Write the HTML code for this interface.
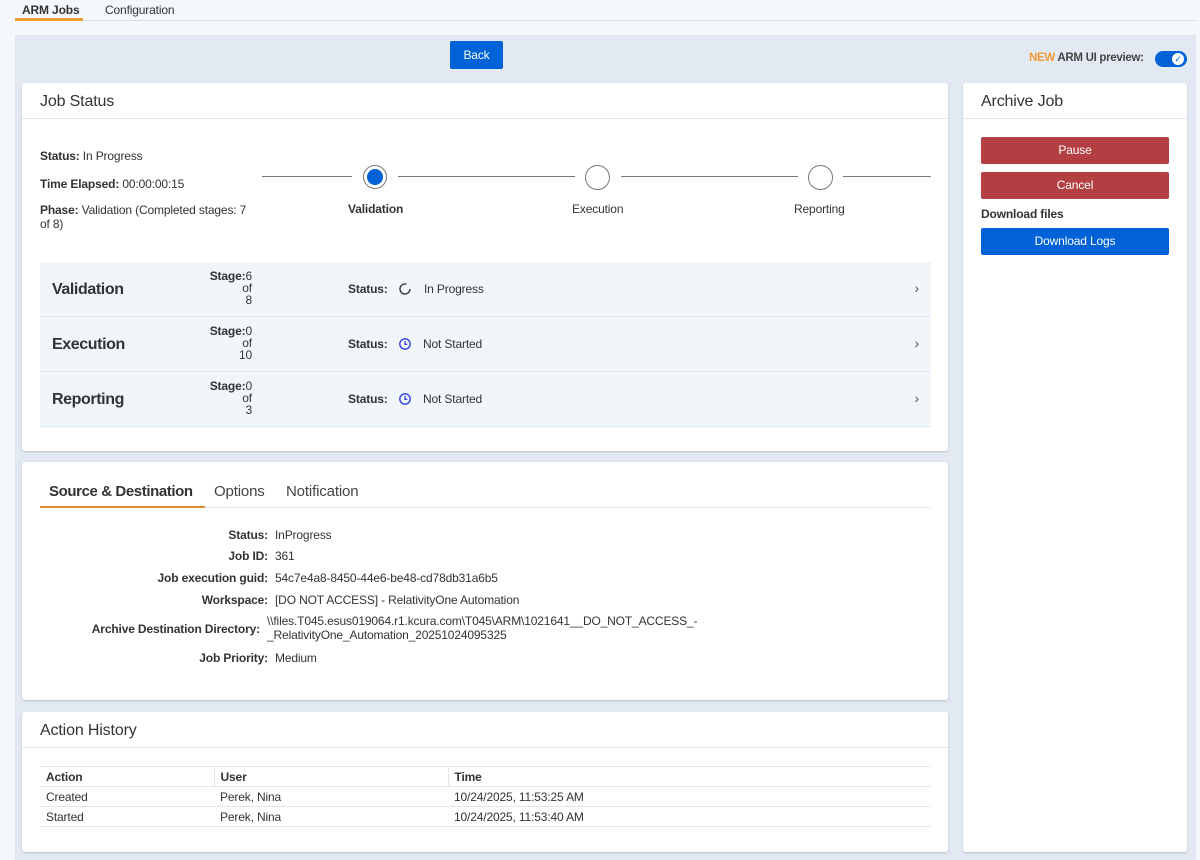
<!DOCTYPE html>
<html><head><style>
*{box-sizing:border-box;margin:0;padding:0}
body{width:1200px;height:860px;background:#f5f8fb;font-family:"Liberation Sans",sans-serif;font-size:12px;color:#333;position:relative;overflow:hidden;letter-spacing:-0.15px}
.abs{position:absolute}
.tabs{position:absolute;left:15px;top:0;width:1181px;height:21px;border-bottom:1px solid #d8dee6}
.tab{position:absolute;top:3px;font-size:12px}
.main{position:absolute;left:15px;top:35px;width:1181px;height:825px;background:#e3e9f2}
.card{position:absolute;background:#fff;border-radius:3px;box-shadow:0 1px 2px rgba(0,0,0,.18)}
.ch{height:36px;border-bottom:1px solid #e3e8ee;padding:9px 18px;font-size:16px;color:#333}
.btn{position:absolute;color:#fff;text-align:center;border-radius:2px;font-size:12px}
.red{background:#b33f42}
.blue{background:#0062d6}
.row{position:absolute;left:18px;width:891px;height:55px;background:#f1f6fa;border-bottom:1px solid #e1e7ee}
.row .n{position:absolute;left:12px;top:19px;font-size:16px;font-weight:bold;color:#333;letter-spacing:-0.4px}
.row .s{position:absolute;left:160px;top:8px;font-size:12px;line-height:12px;text-align:right;width:52px}
.row .st{position:absolute;left:308px;top:20px;font-weight:bold}
.row .ic{position:absolute;left:358px;top:20px}
.row .tx{position:absolute;left:383px;top:20px}
.row .ar{position:absolute;right:12px;top:18px;font-size:14px;color:#555}
.kv{position:absolute;font-size:12px}
.kv b{position:absolute;right:0;white-space:nowrap}
th,td{text-align:left;padding:0 6px;height:20px;border-bottom:1px solid #e1e7ee;font-size:12px}
th{border-top:1px solid #e1e7ee}
th+th{border-left:1px solid #e1e7ee}
</style></head><body>
<div class="tabs">
<div class="tab" style="left:7px;font-weight:bold;color:#333">ARM Jobs</div>
<div class="abs" style="left:0;top:18px;width:68px;height:3px;background:#f29b36"></div>
<div class="tab" style="left:90px">Configuration</div>
</div>
<div class="main">
<div class="btn blue" style="left:435px;top:6px;width:53px;height:28px;line-height:28px">Back</div>
<div class="abs" style="left:1014px;top:17px;font-weight:bold;font-size:11.5px;letter-spacing:-0.3px"><span style="color:#f29b36">NEW</span> <span style="color:#444">ARM UI preview:</span></div>
<div class="abs" style="left:1140px;top:16px;width:32px;height:16px;border-radius:8px;background:#0062d6"><div class="abs" style="left:17px;top:2px;width:12px;height:12px;border-radius:6px;background:#fff;color:#0062d6;font-size:9px;line-height:12px;text-align:center">✓</div></div>

<div class="card" style="left:7px;top:48px;width:926px;height:368px">
<div class="ch" style="padding-top:10px">Job Status</div>
<div class="abs" style="left:18px;top:67px;line-height:13px"><b>Status:</b> In Progress</div>
<div class="abs" style="left:18px;top:94px"><b>Time Elapsed:</b> 00:00:00:15</div>
<div class="abs" style="left:18px;top:120px;width:212px;line-height:14px"><b>Phase:</b> Validation (Completed stages: 7 of 8)</div>
<div class="abs" style="left:240px;top:93px;width:90px;height:1px;background:#777"></div>
<div class="abs" style="left:376px;top:93px;width:177px;height:1px;background:#777"></div>
<div class="abs" style="left:599px;top:93px;width:177px;height:1px;background:#777"></div>
<div class="abs" style="left:821px;top:93px;width:88px;height:1px;background:#777"></div>
<div class="abs" style="left:341px;top:82px;width:24px;height:24px;border-radius:12px;border:1px solid #777;background:#fff"><div class="abs" style="left:3px;top:3px;width:16px;height:16px;border-radius:8px;background:#0062d6"></div></div>
<div class="abs" style="left:563px;top:82px;width:25px;height:25px;border-radius:13px;border:1px solid #777"></div>
<div class="abs" style="left:786px;top:82px;width:25px;height:25px;border-radius:13px;border:1px solid #777"></div>
<div class="abs" style="left:326px;top:119px;font-weight:bold">Validation</div>
<div class="abs" style="left:550px;top:119px">Execution</div>
<div class="abs" style="left:772px;top:119px">Reporting</div>
<div class="row" style="top:179px"><div class="n">Validation</div><div class="s"><b>Stage:</b>6<br>of<br>8</div><div class="st">Status:</div>
<svg class="ic" width="14" height="14" viewBox="0 0 14 14"><path d="M8.5 2.2A5 5 0 1 0 12 7" fill="none" stroke="#444" stroke-width="1.5"/></svg>
<div class="tx" style="left:384px">In Progress</div><div class="ar">›</div></div>
<div class="row" style="top:234px"><div class="n">Execution</div><div class="s"><b>Stage:</b>0<br>of<br>10</div><div class="st">Status:</div>
<svg class="ic" width="14" height="14" viewBox="0 0 14 14"><circle cx="7" cy="7" r="5.2" fill="none" stroke="#3340e8" stroke-width="1.4"/><path d="M7 4v3.3h2.3" fill="none" stroke="#3340e8" stroke-width="1.3"/></svg>
<div class="tx">Not Started</div><div class="ar">›</div></div>
<div class="row" style="top:289px"><div class="n">Reporting</div><div class="s"><b>Stage:</b>0<br>of<br>3</div><div class="st">Status:</div>
<svg class="ic" width="14" height="14" viewBox="0 0 14 14"><circle cx="7" cy="7" r="5.2" fill="none" stroke="#3340e8" stroke-width="1.4"/><path d="M7 4v3.3h2.3" fill="none" stroke="#3340e8" stroke-width="1.3"/></svg>
<div class="tx">Not Started</div><div class="ar">›</div></div>
</div>

<div class="card" style="left:7px;top:427px;width:926px;height:238px">
<div class="abs" style="left:27px;top:21px;font-size:15px;font-weight:bold;color:#333;letter-spacing:-0.4px">Source &amp; Destination</div>
<div class="abs" style="left:192px;top:21px;font-size:15px;color:#444">Options</div>
<div class="abs" style="left:264px;top:21px;font-size:15px;color:#444">Notification</div>
<div class="abs" style="left:18px;top:45px;width:891px;height:1px;background:#e1e7ee"></div>
<div class="abs" style="left:18px;top:44px;width:165px;height:2px;background:#e58a2e"></div>
<div class="kv" style="left:0;top:66px;width:246px"><b>Status:</b></div><div class="abs" style="left:253px;top:66px">InProgress</div>
<div class="kv" style="left:0;top:87px;width:246px"><b>Job ID:</b></div><div class="abs" style="left:253px;top:87px">361</div>
<div class="kv" style="left:0;top:109px;width:246px"><b>Job execution guid:</b></div><div class="abs" style="left:253px;top:109px">54c7e4a8-8450-44e6-be48-cd78db31a6b5</div>
<div class="kv" style="left:0;top:131px;width:246px"><b>Workspace:</b></div><div class="abs" style="left:253px;top:131px">[DO NOT ACCESS] - RelativityOne Automation</div>
<div class="kv" style="left:0;top:160px;width:238px"><b>Archive Destination Directory:</b></div><div class="abs" style="left:245px;top:152px;line-height:14px">\\files.T045.esus019064.r1.kcura.com\T045\ARM\1021641__DO_NOT_ACCESS_-<br>_RelativityOne_Automation_20251024095325</div>
<div class="kv" style="left:0;top:189px;width:246px"><b>Job Priority:</b></div><div class="abs" style="left:253px;top:189px">Medium</div>
</div>

<div class="card" style="left:7px;top:677px;width:926px;height:140px">
<div class="ch" style="padding-top:10px">Action History</div>
<table style="position:absolute;left:18px;top:54px;width:891px;border-collapse:collapse">
<tr><th style="width:174px">Action</th><th style="width:234px">User</th><th>Time</th></tr>
<tr><td>Created</td><td>Perek, Nina</td><td>10/24/2025, 11:53:25 AM</td></tr>
<tr><td>Started</td><td>Perek, Nina</td><td>10/24/2025, 11:53:40 AM</td></tr>
</table>
</div>

<div class="card" style="left:948px;top:48px;width:224px;height:769px">
<div class="ch" style="padding-top:10px">Archive Job</div>
<div class="btn red" style="left:18px;top:54px;width:188px;height:27px;line-height:27px">Pause</div>
<div class="btn red" style="left:18px;top:89px;width:188px;height:27px;line-height:27px">Cancel</div>
<div class="abs" style="left:18px;top:124px;font-weight:bold">Download files</div>
<div class="btn blue" style="left:18px;top:145px;width:188px;height:27px;line-height:27px">Download Logs</div>
</div>
</div>
</body></html>
